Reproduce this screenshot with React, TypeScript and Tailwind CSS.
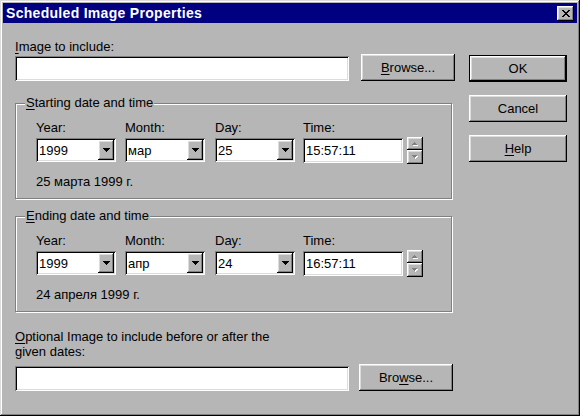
import React from "react";

const raised =
  "shadow-[inset_-1px_-1px_#000,inset_1px_1px_#fff,inset_-2px_-2px_#808080,inset_2px_2px_#dcdcdc]";
const sunken =
  "shadow-[inset_1px_1px_#808080,inset_-1px_-1px_#fff,inset_2px_2px_#000,inset_-2px_-2px_#dcdcdc]";

function U({ children }: { children: React.ReactNode }) {
  return <span className="underline underline-offset-[2px] decoration-1">{children}</span>;
}

function Button({ children, w = "w-[94px]", def = false }: { children: React.ReactNode; w?: string; def?: boolean }) {
  if (def) {
    return (
      <div className={`${w} h-[27px] border border-black bg-[#b6b6b6]`}>
        <div className={`w-full h-full flex items-center justify-center ${raised}`}>{children}</div>
      </div>
    );
  }
  return <div className={`${w} h-[27px] flex items-center justify-center bg-[#b6b6b6] ${raised}`}>{children}</div>;
}

function Combo({ value }: { value: string }) {
  return (
    <div className={`w-[80px] h-[24px] bg-white flex p-[2px] ${sunken}`}>
      <div className="flex-1 flex items-center pl-[1px]">{value}</div>
      <div className={`w-[16px] h-[20px] bg-[#b6b6b6] flex items-center justify-center ${raised}`}>
        <svg width="7" height="4" viewBox="0 0 7 4" shapeRendering="crispEdges">
          <path d="M0 0h7v1H0zM1 1h5v1H1zM2 2h3v1H2zM3 3h1v1H3z" fill="#000" />
        </svg>
      </div>
    </div>
  );
}

function SpinBtn({ up, h }: { up: boolean; h: string }) {
  return (
    <div className={`w-[16px] ${h} bg-[#b6b6b6] flex items-center justify-center ${raised}`}>
      <svg width="6" height="4" viewBox="0 0 6 4" shapeRendering="crispEdges">
        {up ? (
          <>
            <path d="M2 1h1v1H2zM1 2h3v1H1zM0 3h5v1H0z" fill="#fff" transform="translate(1,0)" />
            <path d="M2 0h1v1H2zM1 1h3v1H1zM0 2h5v1H0z" fill="#808080" />
          </>
        ) : (
          <>
            <path d="M0 1h5v1H0zM1 2h3v1H1zM2 3h1v1H2z" fill="#fff" transform="translate(1,0)" />
            <path d="M0 0h5v1H0zM1 1h3v1H1zM2 2h1v1H2z" fill="#808080" />
          </>
        )}
      </svg>
    </div>
  );
}

function Field({ label, children, className = "" }: { label: string; children: React.ReactNode; className?: string }) {
  return (
    <div className={`flex flex-col ${className}`}>
      <div className="h-[15px]">{label}</div>
      <div className="mt-[3px]">{children}</div>
    </div>
  );
}

function DateGroup({
  title,
  year,
  month,
  day,
  time,
  text,
  className = "",
}: {
  title: React.ReactNode;
  year: string;
  month: string;
  day: string;
  time: string;
  text: string;
  className?: string;
}) {
  return (
    <div
      className={`relative w-[437px] h-[96px] border border-[#808080] shadow-[inset_1px_1px_#fff,1px_1px_#fff] pl-[20px] pt-[16px] ${className}`}
    >
      <div className="absolute left-[9px] top-[-9px] px-[1px] bg-[#b6b6b6] h-[15px]">{title}</div>
      <div className="flex">
        <Field label="Year:">
          <Combo value={year} />
        </Field>
        <Field label="Month:" className="ml-[9px]">
          <Combo value={month} />
        </Field>
        <Field label="Day:" className="ml-[10px]">
          <Combo value={day} />
        </Field>
        <Field label="Time:" className="ml-[8px]">
          <div className="flex">
            <div className={`w-[100px] h-[25px] bg-white flex items-center pl-[3px] ${sunken}`}>{time}</div>
            <div className="ml-[4px] mt-[-1px] flex flex-col">
              <SpinBtn up h="h-[13px]" />
              <SpinBtn up={false} h="h-[14px]" />
            </div>
          </div>
        </Field>
      </div>
      <div className="mt-[10px] h-[15px]">{text}</div>
    </div>
  );
}

export default function App() {
  return (
    <div
      className={`w-[580px] h-[416px] bg-[#b6b6b6] p-[3px] flex flex-col font-['Liberation_Sans',Arial,sans-serif] text-[13px] leading-[15px] text-black shadow-[inset_-1px_-1px_#000,inset_1px_1px_#dcdcdc,inset_-2px_-2px_#808080,inset_2px_2px_#fff]`}
    >
      <div className="h-[20px] bg-[#000080] flex items-center justify-between pl-[3px] pr-[3px]">
        <span className="text-white font-bold text-[14px] tracking-[0.3px]">Scheduled Image Properties</span>
        <div className={`w-[17px] h-[15px] bg-[#b6b6b6] flex items-center justify-center ${raised}`}>
          <svg width="8" height="7" viewBox="0 0 8 7" shapeRendering="crispEdges">
            <path
              d="M0 0h2v1H0zM6 0h2v1H6zM1 1h2v1H1zM5 1h2v1H5zM2 2h4v1H2zM3 3h2v1H3zM2 4h4v1H2zM1 5h2v1H1zM5 5h2v1H5zM0 6h2v1H0zM6 6h2v1H6z"
              fill="#000"
            />
          </svg>
        </div>
      </div>
      <div className="flex pl-[12px]">
        <div className="w-[440px] flex flex-col">
          <div className="mt-[16px] h-[15px]">
            <U>I</U>mage to include:
          </div>
          <div className="flex items-end h-[27px]">
            <div className={`w-[334px] h-[25px] bg-white ${sunken}`} />
            <div className="ml-[12px]">
              <Button>
                <U>B</U>rowse...
              </Button>
            </div>
          </div>
          <DateGroup
            className="mt-[22px]"
            title={
              <>
                <U>S</U>tarting date and time
              </>
            }
            year="1999"
            month="мар"
            day="25"
            time="15:57:11"
            text="25 марта 1999 г."
          />
          <DateGroup
            className="mt-[17px]"
            title={
              <>
                <U>E</U>nding date and time
              </>
            }
            year="1999"
            month="апр"
            day="24"
            time="16:57:11"
            text="24 апреля 1999 г."
          />
          <div className="mt-[17px]">
            <U>O</U>ptional Image to include before or after the
            <br />
            given dates:
          </div>
          <div className="mt-[5px] flex items-end h-[27px]">
            <div className={`w-[334px] h-[25px] bg-white ${sunken}`} />
            <div className="ml-[10px]">
              <Button>
                Bro<U>w</U>se...
              </Button>
            </div>
          </div>
        </div>
        <div className="ml-[14px] pt-[32px] flex flex-col gap-[13px]">
          <Button w="w-[98px]" def>
            OK
          </Button>
          <Button w="w-[98px]">Cancel</Button>
          <Button w="w-[98px]">
            <U>H</U>elp
          </Button>
        </div>
      </div>
    </div>
  );
}
